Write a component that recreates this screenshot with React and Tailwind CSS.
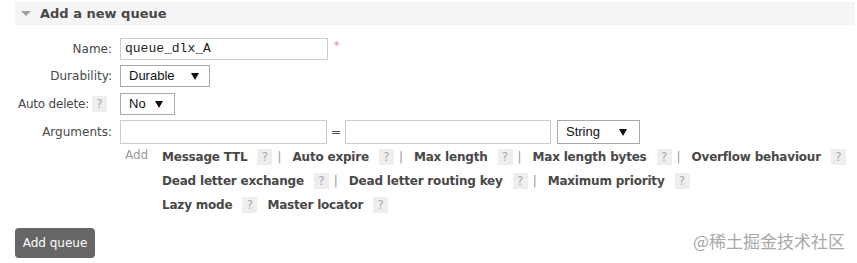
import React from 'react';

// help "?" badge
function Help({ className = '' }) {
    return (
        <span className={`inline-flex shrink-0 items-center justify-center w-[15px] h-[16px] bg-[#eeeeee] text-[#aaaaaa] text-[12px] ${className}`}>?</span>
    );
}

function Pipe() {
    return <span className="inline-flex shrink-0 justify-center w-[6px] ml-[4px] mr-[10px] text-[#999999]">|</span>;
}

function Arrow() {
    return (
        <svg width="8" height="7" viewBox="0 0 8 7">
            <polygon points="0,0 8,0 4,7" fill="#111111" />
        </svg>
    );
}

function FakeSelect({ label, width, arrowRight }) {
    return (
        <div
            className={`flex items-center justify-between border border-[#a9a9a9] bg-white h-[22px] pl-[8px] font-['Liberation_Sans',Arial,sans-serif] text-[13px] text-[#111111] ${width} ${arrowRight}`}
        >
            <span>{label}</span>
            <Arrow />
        </div>
    );
}

const rows = [
    [['Message TTL', true], ['Auto expire', true], ['Max length', true], ['Max length bytes', true], ['Overflow behaviour', false]],
    [['Dead letter exchange', true], ['Dead letter routing key', true], ['Maximum priority', false]],
    [['Lazy mode', false], ['Master locator', false]],
];

export default function App() {
    return (
        <div className="relative w-[857px] h-[263px] bg-white overflow-hidden font-['DejaVu_Sans',Verdana,sans-serif] text-[12px] text-[#484848]">
            {/* section header */}
            <div className="ml-[15px] mr-[2px] mt-[2px] h-[23px] bg-[#f5f5f5] flex items-center">
                <svg className="ml-[6px]" width="10" height="5" viewBox="0 0 10 5">
                    <polygon points="0,0 10,0 5,5" fill="#a0a0a0" />
                </svg>
                <span className="ml-[9px] font-bold text-[13px] text-[#484848]">Add a new queue</span>
            </div>

            {/* Name */}
            <div className="mt-[13px] flex items-center h-[22px]">
                <div className="w-[112px] text-right">Name:</div>
                <div className="ml-[8px] w-[208px] h-[22px] border border-[#cccccc] flex items-center pl-[4px] font-['Liberation_Mono','Courier_New',monospace] text-[13px] text-[#222222]">
                    queue_dlx_A
                </div>
                <span className="ml-[6px] -mt-[6px] text-[#f08080] text-[11px]">*</span>
            </div>

            {/* Durability */}
            <div className="mt-[5px] flex items-center h-[22px]">
                <div className="w-[112px] text-right">Durability:</div>
                <div className="ml-[8px]">
                    <FakeSelect label="Durable" width="w-[90px]" arrowRight="pr-[10px]" />
                </div>
            </div>

            {/* Auto delete */}
            <div className="mt-[6px] flex items-center h-[22px]">
                <div className="w-[107px] flex justify-end items-center whitespace-nowrap">
                    <span className="tracking-[-0.2px]">Auto delete:</span>
                    <Help className="ml-[3px]" />
                </div>
                <div className="ml-[13px]">
                    <FakeSelect label="No" width="w-[55px]" arrowRight="pr-[11px]" />
                </div>
            </div>

            {/* Arguments */}
            <div className="mt-[5px] flex items-center h-[24px]">
                <div className="w-[112px] text-right">Arguments:</div>
                <div className="ml-[8px] w-[207px] h-[24px] border border-[#cccccc]" />
                <span className="w-[18px] text-center text-[#484848]">=</span>
                <div className="w-[206px] h-[24px] border border-[#cccccc]" />
                <div className="ml-[6px]">
                    <div className="flex items-center justify-between border border-[#a9a9a9] bg-white h-[24px] w-[83px] pl-[8px] pr-[12px] font-['Liberation_Sans',Arial,sans-serif] text-[13px] text-[#111111]">
                        <span>String</span>
                        <Arrow />
                    </div>
                </div>
            </div>

            {/* argument shortcuts */}
            <div className="mt-[1px] flex">
                <div className="w-[125px] shrink-0" />
                <div className="w-[37px] shrink-0 text-[#999999] leading-[20px]">Add</div>
                <div className="flex flex-col">
                    {rows.map((row, ri) => (
                        <div key={ri} className="flex items-center h-[24px] whitespace-nowrap">
                            {row.map(([name, pipe], i) => (
                                <React.Fragment key={name}>
                                    <span className={`shrink-0 font-bold tracking-[-0.2px] ${i > 0 && !rows[ri][i - 1][1] ? 'ml-[10px]' : ''}`}>{name}</span>
                                    <Help className="ml-[10px]" />
                                    {pipe && <Pipe />}
                                </React.Fragment>
                            ))}
                        </div>
                    ))}
                </div>
            </div>

            {/* submit */}
            <div className="ml-[15px] mt-[11px] w-[80px] h-[30px] rounded-[4px] bg-[#666666] text-white flex items-center justify-center text-[12px]">
                Add queue
            </div>

            {/* watermark */}
            <div className="absolute right-[12px] bottom-[14px] text-[17px] text-[#a8a8a8] font-['Noto_Sans_CJK_SC',sans-serif] leading-none">
                @稀土掘金技术社区
            </div>
        </div>
    );
}
